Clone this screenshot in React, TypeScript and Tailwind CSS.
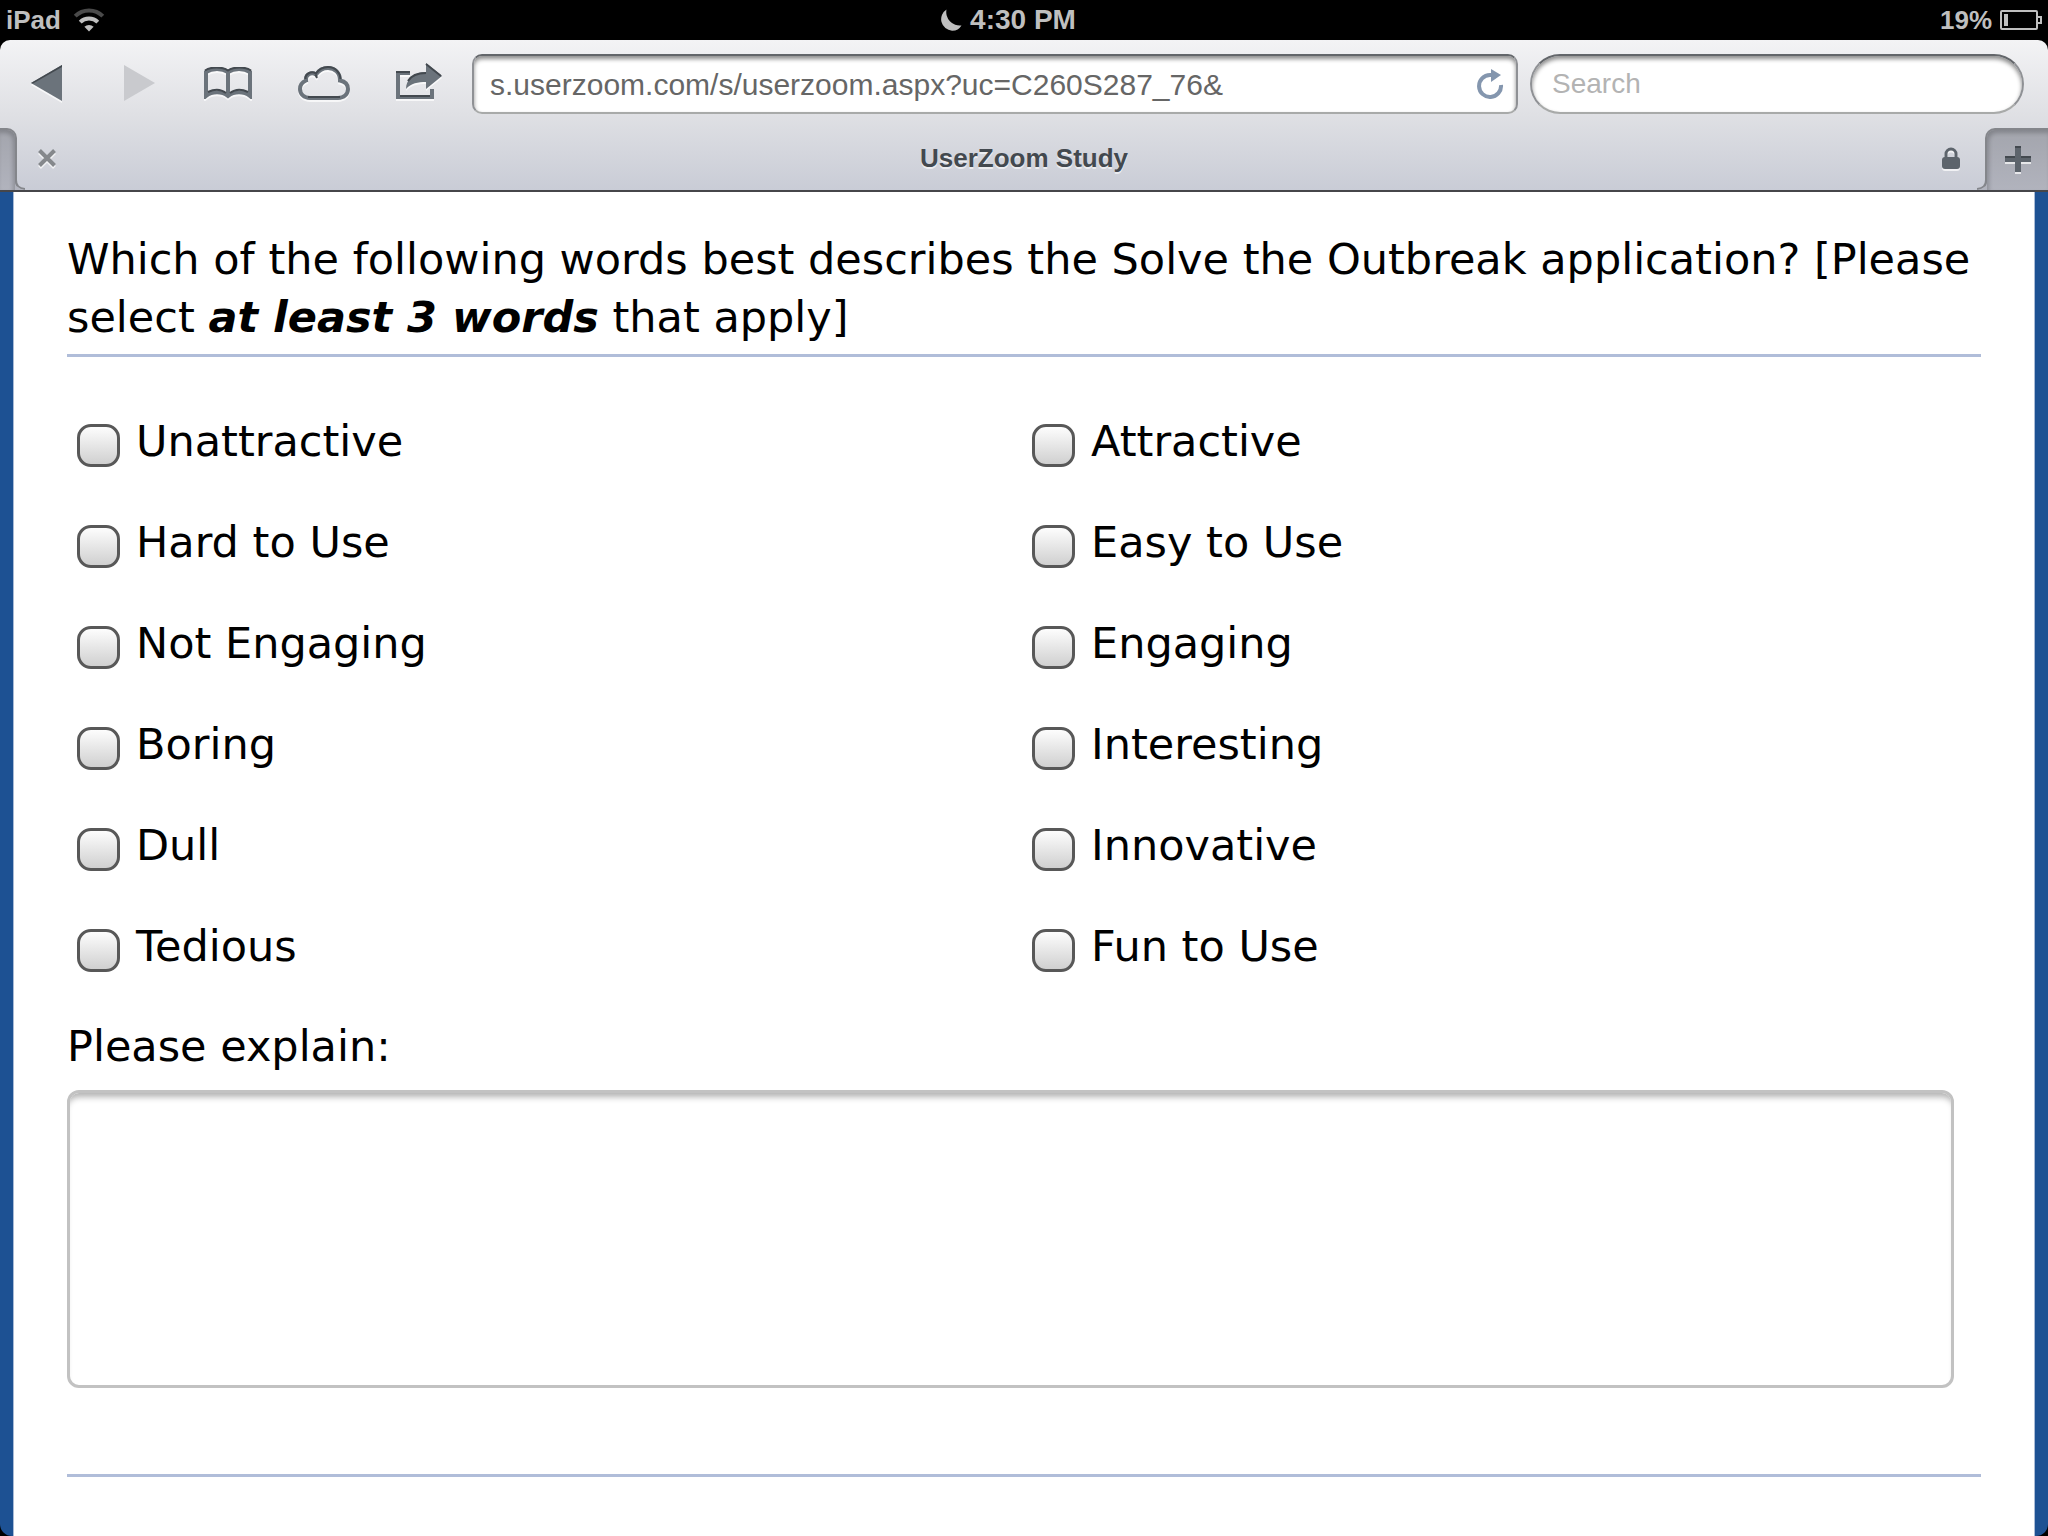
import React, { useState } from 'react';

const LEFT_WORDS = ['Unattractive', 'Hard to Use', 'Not Engaging', 'Boring', 'Dull', 'Tedious'];
const RIGHT_WORDS = ['Attractive', 'Easy to Use', 'Engaging', 'Interesting', 'Innovative', 'Fun to Use'];

const StatusBar: React.FC = () => (
  <div className="flex h-10 items-center justify-between px-[6px] text-[26px] leading-10 font-bold text-[#bfbfbf]">
    <div className="flex flex-1 items-center gap-3">
      <span>iPad</span>
      <svg className="h-6 w-8" viewBox="0 0 32 24" fill="none" aria-hidden="true">
        <path d="M2.2 8.2a19.5 19.5 0 0 1 27.600 0" stroke="#4a4a4a" strokeWidth="4" />
        <path d="M7.200 14.200a12.500 12.500 0 0 1 17.600 0" stroke="#bfbfbf" strokeWidth="4" />
        <path d="M16 23.500l-4.600-4.700a6.600 6.600 0 0 1 9.200 0z" fill="#bfbfbf" />
      </svg>
    </div>
    <div className="flex items-center gap-2 pr-8 text-[28px]">
      <svg className="size-[22px]" viewBox="0 0 22 22" aria-hidden="true">
        <path d="M6.500 0.500A11.500 11.500 0 0 0 12 21.700a10.800 10.800 0 0 0 9.500-5.200A13.500 13.500 0 0 1 6.500 0.500z" fill="#bfbfbf" />
      </svg>
      <span>4:30 PM</span>
    </div>
    <div className="flex flex-1 items-center justify-end gap-2">
      <span>19%</span>
      <svg className="h-5 w-[42px]" viewBox="0 0 42 20" fill="none" aria-hidden="true">
        <rect x="1" y="1" width="36" height="18" rx="1" stroke="#bfbfbf" strokeWidth="2" />
        <path d="M38 7h3v6h-3" stroke="#bfbfbf" strokeWidth="2" />
        <rect x="4" y="4" width="4" height="12" fill="#bfbfbf" />
      </svg>
    </div>
  </div>
);

// Glyphs are pressed into the metal: dark top edge, white lip below
const Glyph: React.FC<{ className: string; viewBox: string; children: React.ReactNode }> = ({ className, viewBox, children }) => (
  <svg className={`${className} drop-shadow-[0_2px_0_rgba(255,255,255,0.7)]`} viewBox={viewBox} fill="none" aria-hidden="true">
    {children}
  </svg>
);

const Toolbar: React.FC = () => {
  const [url, setUrl] = useState('s.userzoom.com/s/userzoom.aspx?uc=C260S287_76&');
  const [query, setQuery] = useState('');

  return (
    <div className="flex items-center pt-[14px] pr-6 pl-[31px]">
      <nav className="mr-[30px] flex items-center pb-[2px]" aria-label="Browser">
        <button type="button" aria-label="Back" className="mr-[62px]">
          <Glyph className="h-9 w-[31px]" viewBox="0 0 31 36">
            <path d="M31 0v36L0 18z" fill="#6b737b" />
            <path d="M31 0v2L2 18.500 0 18z" fill="#43494f" />
          </Glyph>
        </button>
        <button type="button" aria-label="Forward" disabled className="mr-[49px]">
          <svg className="h-9 w-[31px]" viewBox="0 0 31 36" aria-hidden="true">
            <path d="M0 0v36l31-18z" fill="#c9cace" />
          </svg>
        </button>
        <button type="button" aria-label="Bookmarks" className="mr-[46px]">
          <Glyph className="h-8 w-12" viewBox="0 0 48 32">
            <path d="M2 29V5c6-4 16-4 22 0 6-4 16-4 22 0v24c-6-5-16-5-22 0-6-5-16-5-22 0zM24 5v24" stroke="#6b737b" strokeWidth="4" />
            <path d="M1 3.500c6-4 17-4 23 0 6-4 17-4 23 0M4 25c6-3 13-3 18 1M26 26c5-4 12-4 18-1" stroke="#43494f" strokeWidth="2" />
          </Glyph>
        </button>
        <button type="button" aria-label="iCloud tabs" className="mr-[46px]">
          <Glyph className="h-[34px] w-[52px]" viewBox="0 0 52 34">
            <path d="M12 32C6 32 2 28 2 23c0-4 2.500-7 6-8.500C7 9 13 5.500 18 8.500 21 4 25 2 30 2c7 0 12 5 12 12.500 5 1 8 4 8 8.500 0 5-4 9-10 9z" stroke="#6b737b" strokeWidth="4" />
            <path d="M7.500 13C7 8 13 4.500 18 7.500 21 3 25 1 30 1c7 0 12 5 12.500 12M17.500 8.500L19 12M10 31h32" stroke="#43494f" strokeWidth="2" />
          </Glyph>
        </button>
        <button type="button" aria-label="Share">
          <Glyph className="h-10 w-[46px]" viewBox="0 0 46 40">
            <path d="M14 10H2v24h34V26" stroke="#6b737b" strokeWidth="4" />
            <path d="M30 0l16 13-16 13v-7c-8 0-15 1-20 7C10 16 18 9 30 9z" fill="#6b737b" />
            <path d="M30 1l15 12M30 10c-9 0-15 3-18 8M0 9h14M4 33h30" stroke="#43494f" strokeWidth="2" />
          </Glyph>
        </button>
      </nav>

      <div className="mr-3 flex h-[60px] flex-1 items-center rounded-[10px] border-2 border-t-[#63666a] border-r-[#8f9195] border-b-[#a8aaa9] border-l-[#8f9195] bg-white pr-3 pl-4 shadow-[inset_0_3px_4px_rgba(0,0,0,0.45)]">
        <input
          type="text"
          aria-label="Address"
          value={url}
          onChange={e => setUrl(e.target.value)}
          className="min-w-0 flex-1 bg-transparent text-[30px] text-[#666] outline-none"
        />
        <button type="button" aria-label="Reload">
          <svg className="h-[30px] w-7" viewBox="0 0 28 30" fill="none" aria-hidden="true">
            <path d="M15 6H14A11 11 0 1 0 25 16" stroke="#8496ae" strokeWidth="4" />
            <path d="M15 0l10 6-10 7z" fill="#8496ae" />
          </svg>
        </button>
      </div>

      <input
        type="search"
        aria-label="Search"
        placeholder="Search"
        value={query}
        onChange={e => setQuery(e.target.value)}
        className="h-[60px] w-[494px] rounded-full border-2 border-t-[#63666a] border-r-[#8f9195] border-b-[#a8aaa9] border-l-[#8f9195] bg-white px-5 text-[28px] text-[#666] shadow-[inset_0_3px_4px_rgba(0,0,0,0.45)] outline-none placeholder:text-[#b3b3b3]"
      />
    </div>
  );
};

const TabBar: React.FC = () => (
  <div className="mt-[14px] flex h-[62px] items-stretch">
    <div className="relative w-[17px] rounded-tr-[10px] border-t-2 border-r-2 border-[#84868b] bg-linear-to-b from-[#a3a5ad] to-[#b1b3bd] shadow-[inset_-2px_3px_4px_rgba(0,0,0,0.2)]">
      <svg className="absolute -right-[10px] bottom-0 size-[10px]" viewBox="0 0 10 10" fill="none" aria-hidden="true">
        <path d="M0 0c0 6 3 9 10 10H0z" fill="#b1b3bd" />
        <path d="M1 0c0 6 3 8 9 9" stroke="#84868b" strokeWidth="2" />
      </svg>
    </div>
    <div className="flex flex-1 items-center pr-[25px] pb-[2px] pl-[21px]">
      <button type="button" aria-label="Close tab">
        <Glyph className="size-[18px]" viewBox="0 0 18 18">
          <path d="M1.500 1.500l15 15M16.500 1.500l-15 15" stroke="#85888c" strokeWidth="4" />
        </Glyph>
      </button>
      <span className="flex-1 pl-[50px] text-center text-[26px] font-bold text-[#43494f] [text-shadow:0_2px_0_rgba(255,255,255,0.6)]">
        UserZoom Study
      </span>
      <Glyph className="h-[22px] w-[18px]" viewBox="0 0 18 22">
        <path d="M4 11V7a5 5 0 0 1 10 0v4" stroke="#5d646c" strokeWidth="3" />
        <rect y="10" width="18" height="12" rx="3" fill="#5d646c" />
      </Glyph>
    </div>
    <button
      type="button"
      aria-label="New tab"
      className="relative flex w-[63px] items-center justify-center rounded-tl-[10px] border-t-2 border-l-2 border-[#84868b] bg-linear-to-b from-[#a3a5ad] to-[#b1b3bd] pb-[2px] shadow-[inset_2px_3px_4px_rgba(0,0,0,0.2)]"
    >
      <svg className="absolute bottom-0 -left-[10px] size-[10px]" viewBox="0 0 10 10" fill="none" aria-hidden="true">
        <path d="M10 0c0 6-3 9-10 10h10z" fill="#b1b3bd" />
        <path d="M9 0c0 6-3 8-9 9" stroke="#84868b" strokeWidth="2" />
      </svg>
      <Glyph className="size-[26px]" viewBox="0 0 26 26">
        <path d="M13 0v26M0 13h26" stroke="#5d646c" strokeWidth="6" />
        <path d="M0 11h10M16 11h10M10 1h6" stroke="#43494f" strokeWidth="2" />
      </Glyph>
    </button>
  </div>
);

const WordColumn: React.FC<{ words: string[] }> = ({ words }) => (
  <ul className="flex w-1/2 flex-col gap-[41px] pl-[10px]">
    {words.map(word => (
      <li key={word}>
        <label className="flex h-[60px] items-center gap-4">
          <input
            type="checkbox"
            className="mt-2 size-[43px] appearance-none rounded-[14px] border-3 border-[#585858] bg-linear-to-b from-[#fdfdfd] to-[#d0d0d0] checked:from-[#b8cdf0] checked:to-[#6f95d6]"
          />
          <span>{word}</span>
        </label>
      </li>
    ))}
  </ul>
);

export default function App() {
  const [comment, setComment] = useState('');

  return (
    <div className="flex min-h-screen flex-col bg-black font-['Liberation_Sans',Arial,sans-serif]">
      <StatusBar />
      <header className="rounded-t-[10px] border-b-2 border-[#46464a] bg-linear-to-b from-[#f3f3f5] via-[#dfe0e4] to-[#c9ccd6]">
        <Toolbar />
        <TabBar />
      </header>

      <div className="flex flex-1 flex-col rounded-b-xl bg-[#1d5193] px-[13px]">
        <main className="flex-1 border-x border-[#a9bbd6] bg-white px-[53px] pt-[38px] font-['DejaVu_Sans',Verdana,sans-serif] text-[43px] text-black">
          <h1 className="border-b-3 border-[#b0bdd9] pb-2 leading-[58px]">
            Which of the following words best describes the Solve the Outbreak application? [Please select{' '}
            <strong className="italic">at least 3 words</strong> that apply]
          </h1>

          <form>
            <div className="flex pt-[54px] pr-1">
              <WordColumn words={LEFT_WORDS} />
              <WordColumn words={RIGHT_WORDS} />
            </div>

            <label htmlFor="explain" className="mt-10 block leading-[60px]">Please explain:</label>
            <textarea
              id="explain"
              value={comment}
              onChange={e => setComment(e.target.value)}
              className="mt-[14px] block h-[298px] w-[calc(100%-27px)] resize-none rounded-xl border-3 border-[#c2c2c2] bg-white p-3 shadow-[inset_0_8px_6px_-4px_rgba(0,0,0,0.3)] outline-none"
            />
          </form>
          <hr className="mt-[86px] border-t-3 border-[#b0bdd9]" />
        </main>
      </div>
    </div>
  );
}
